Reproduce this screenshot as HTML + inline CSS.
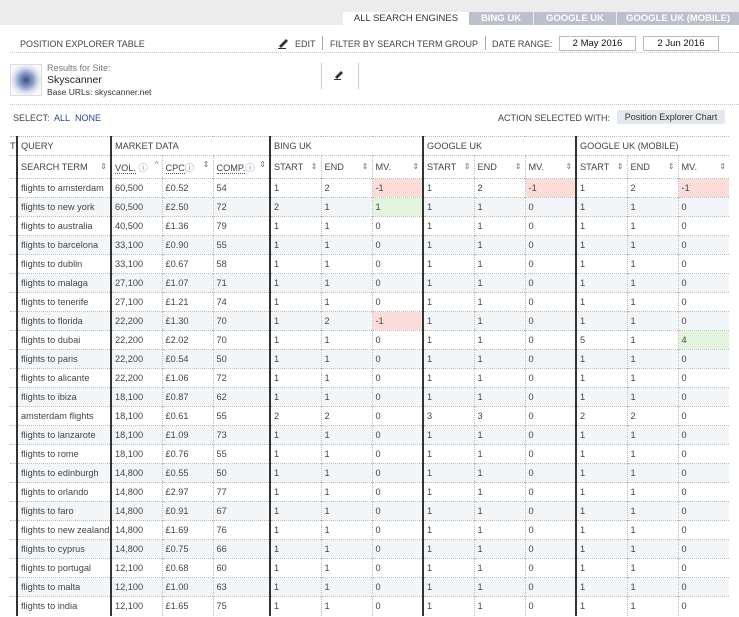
<!DOCTYPE html>
<html><head><meta charset="utf-8">
<style>
*{margin:0;padding:0;box-sizing:border-box}
body{width:739px;height:617px;overflow:hidden;background:#fff;font-family:"Liberation Sans",sans-serif;color:#444;position:relative}
.top{position:absolute;left:0;top:0;width:739px;height:25px;background:#ececec}
.tab{position:absolute;top:12px;height:13px;font-size:9.5px;line-height:13px;text-align:center;color:#fff;background:#bcc0cc;font-weight:bold}
.t{position:absolute;font-size:9px;white-space:nowrap}
.dot{position:absolute;border-top:1px dotted #c8c8c8;height:0}
.box{position:absolute;top:36px;height:15px;border:1px solid #bbb;font-size:9.5px;text-align:center;line-height:13px;color:#111}
table{position:absolute;left:10px;top:136px;width:719px;border-collapse:collapse;table-layout:fixed;font-size:9.2px}
td{height:19px;border-top:1px dotted #bbb;border-left:1px dotted #bbb;padding:0 3px;white-space:nowrap;overflow:hidden;color:#444}
tr.h1 td{height:19px;font-size:9.2px;color:#444}
tr.h2 td{height:23px;font-size:9.2px;color:#444}
tr.alt td{background:#f3f6f9}
td.k{border-left:2px solid #333}
td.r{background:#fbdcd8!important}
td.g{background:#e4f5df!important}
.s{float:right;color:#777;font-size:8px}
.u{border-bottom:1px dotted #555}
.i{color:#6a7fb0}
td.f{border-left:none;padding:0;background:#fff!important}
</style></head><body>
<div class="top"></div>
<div class="tab" style="left:343px;width:126px;background:#fff;color:#333;font-weight:normal">ALL SEARCH ENGINES</div>
<div class="tab" style="left:469px;width:64px">BING UK</div>
<div class="tab" style="left:534px;width:82px">GOOGLE UK</div>
<div class="tab" style="left:617px;width:122px">GOOGLE UK (MOBILE)</div>

<div class="t" style="left:20px;top:39px">POSITION EXPLORER TABLE</div>
<svg style="position:absolute;left:278px;top:37px" width="11" height="12"><path d="M1 9 L8 2 L10 4 L3 11 Z" fill="#333"/><path d="M0 11.5 H8" stroke="#333"/></svg>
<div class="t" style="left:295px;top:39px">EDIT</div>
<div style="position:absolute;left:322px;top:36px;height:14px;border-left:1px solid #aaa"></div>
<div class="t" style="left:330px;top:39px">FILTER BY SEARCH TERM GROUP</div>
<div style="position:absolute;left:485px;top:36px;height:14px;border-left:1px solid #aaa"></div>
<div class="t" style="left:492px;top:39px">DATE RANGE:</div>
<div class="box" style="left:559px;width:77px">2 May 2016</div>
<div class="box" style="left:643px;width:76px">2 Jun 2016</div>
<div class="dot" style="left:10px;top:52px;width:729px"></div>

<div style="position:absolute;left:10px;top:64px;width:32px;height:32px;border:1px solid #ddd;background:radial-gradient(circle,#3a4a7a 0,#7f93c4 30%,#dfe4f0 60%,#fafafa 80%)"></div>
<div class="t" style="left:47px;top:63px;color:#777">Results for Site:</div>
<div class="t" style="left:47px;top:74px;font-size:10.5px;color:#222">Skyscanner</div>
<div class="t" style="left:47px;top:87px;font-size:8.5px;color:#333">Base URLs: skyscanner.net</div>
<div style="position:absolute;left:321px;top:63px;height:26px;border-left:1px solid #ccc"></div>
<div style="position:absolute;left:358px;top:63px;height:26px;border-left:1px solid #ccc"></div>
<svg style="position:absolute;left:334px;top:70px" width="10" height="10"><path d="M1 7 L7 1 L9 3 L3 9 Z" fill="#333"/><path d="M0 9.5 H7" stroke="#333"/></svg>
<div class="dot" style="left:10px;top:104px;width:729px"></div>

<div class="t" style="left:13px;top:113px">SELECT:&nbsp; <span style="color:#2a4a8a">ALL&nbsp; NONE</span></div>
<div class="t" style="left:498px;top:113px">ACTION SELECTED WITH:</div>
<div class="t" style="left:617px;top:110px;width:108px;height:14px;background:#e3e7ee;border-radius:2px;text-align:center;line-height:14px;font-size:9px;color:#333">Position Explorer Chart</div>

<table>
<colgroup><col style="width:7px"><col style="width:94px"><col style="width:51px"><col style="width:51px"><col style="width:57px"><col style="width:51px"><col style="width:51px"><col style="width:51px"><col style="width:51px"><col style="width:51px"><col style="width:51px"><col style="width:51px"><col style="width:51px"><col style="width:51px"></colgroup>
<tr class="h1"><td class="f">T</td><td class="k">QUERY</td><td class="k" colspan="3">MARKET DATA</td><td class="k" colspan="3">BING UK</td><td class="k" colspan="3">GOOGLE UK</td><td class="k" colspan="3">GOOGLE UK (MOBILE)</td></tr>
<tr class="h2"><td class="f"></td><td class="k">SEARCH TERM<span class="s">⇕</span></td><td class="k"><span class="u">VOL.</span> <span class="i">ⓘ</span><span class="s">^</span></td><td><span class="u">CPC</span><span class="i">ⓘ</span><span class="s">⇕</span></td><td><span class="u">COMP.</span><span class="i">ⓘ</span><span class="s">⇕</span></td><td class="k">START<span class="s">⇕</span></td><td>END<span class="s">⇕</span></td><td>MV.<span class="s">⇕</span></td><td class="k">START<span class="s">⇕</span></td><td>END<span class="s">⇕</span></td><td>MV.<span class="s">⇕</span></td><td class="k">START<span class="s">⇕</span></td><td>END<span class="s">⇕</span></td><td>MV.<span class="s">⇕</span></td></tr>
<tr><td class="f"></td><td class="k">flights to amsterdam</td><td class="k">60,500</td><td>£0.52</td><td>54</td><td class="k">1</td><td>2</td><td class="r">-1</td><td class="k">1</td><td>2</td><td class="r">-1</td><td class="k">1</td><td>2</td><td class="r">-1</td></tr>
<tr class="alt"><td class="f"></td><td class="k">flights to new york</td><td class="k">60,500</td><td>£2.50</td><td>72</td><td class="k">2</td><td>1</td><td class="g">1</td><td class="k">1</td><td>1</td><td>0</td><td class="k">1</td><td>1</td><td>0</td></tr>
<tr><td class="f"></td><td class="k">flights to australia</td><td class="k">40,500</td><td>£1.36</td><td>79</td><td class="k">1</td><td>1</td><td>0</td><td class="k">1</td><td>1</td><td>0</td><td class="k">1</td><td>1</td><td>0</td></tr>
<tr class="alt"><td class="f"></td><td class="k">flights to barcelona</td><td class="k">33,100</td><td>£0.90</td><td>55</td><td class="k">1</td><td>1</td><td>0</td><td class="k">1</td><td>1</td><td>0</td><td class="k">1</td><td>1</td><td>0</td></tr>
<tr><td class="f"></td><td class="k">flights to dublin</td><td class="k">33,100</td><td>£0.67</td><td>58</td><td class="k">1</td><td>1</td><td>0</td><td class="k">1</td><td>1</td><td>0</td><td class="k">1</td><td>1</td><td>0</td></tr>
<tr class="alt"><td class="f"></td><td class="k">flights to malaga</td><td class="k">27,100</td><td>£1.07</td><td>71</td><td class="k">1</td><td>1</td><td>0</td><td class="k">1</td><td>1</td><td>0</td><td class="k">1</td><td>1</td><td>0</td></tr>
<tr><td class="f"></td><td class="k">flights to tenerife</td><td class="k">27,100</td><td>£1.21</td><td>74</td><td class="k">1</td><td>1</td><td>0</td><td class="k">1</td><td>1</td><td>0</td><td class="k">1</td><td>1</td><td>0</td></tr>
<tr class="alt"><td class="f"></td><td class="k">flights to florida</td><td class="k">22,200</td><td>£1.30</td><td>70</td><td class="k">1</td><td>2</td><td class="r">-1</td><td class="k">1</td><td>1</td><td>0</td><td class="k">1</td><td>1</td><td>0</td></tr>
<tr><td class="f"></td><td class="k">flights to dubai</td><td class="k">22,200</td><td>£2.02</td><td>70</td><td class="k">1</td><td>1</td><td>0</td><td class="k">1</td><td>1</td><td>0</td><td class="k">5</td><td>1</td><td class="g">4</td></tr>
<tr class="alt"><td class="f"></td><td class="k">flights to paris</td><td class="k">22,200</td><td>£0.54</td><td>50</td><td class="k">1</td><td>1</td><td>0</td><td class="k">1</td><td>1</td><td>0</td><td class="k">1</td><td>1</td><td>0</td></tr>
<tr><td class="f"></td><td class="k">flights to alicante</td><td class="k">22,200</td><td>£1.06</td><td>72</td><td class="k">1</td><td>1</td><td>0</td><td class="k">1</td><td>1</td><td>0</td><td class="k">1</td><td>1</td><td>0</td></tr>
<tr class="alt"><td class="f"></td><td class="k">flights to ibiza</td><td class="k">18,100</td><td>£0.87</td><td>62</td><td class="k">1</td><td>1</td><td>0</td><td class="k">1</td><td>1</td><td>0</td><td class="k">1</td><td>1</td><td>0</td></tr>
<tr><td class="f"></td><td class="k">amsterdam flights</td><td class="k">18,100</td><td>£0.61</td><td>55</td><td class="k">2</td><td>2</td><td>0</td><td class="k">3</td><td>3</td><td>0</td><td class="k">2</td><td>2</td><td>0</td></tr>
<tr class="alt"><td class="f"></td><td class="k">flights to lanzarote</td><td class="k">18,100</td><td>£1.09</td><td>73</td><td class="k">1</td><td>1</td><td>0</td><td class="k">1</td><td>1</td><td>0</td><td class="k">1</td><td>1</td><td>0</td></tr>
<tr><td class="f"></td><td class="k">flights to rome</td><td class="k">18,100</td><td>£0.76</td><td>55</td><td class="k">1</td><td>1</td><td>0</td><td class="k">1</td><td>1</td><td>0</td><td class="k">1</td><td>1</td><td>0</td></tr>
<tr class="alt"><td class="f"></td><td class="k">flights to edinburgh</td><td class="k">14,800</td><td>£0.55</td><td>50</td><td class="k">1</td><td>1</td><td>0</td><td class="k">1</td><td>1</td><td>0</td><td class="k">1</td><td>1</td><td>0</td></tr>
<tr><td class="f"></td><td class="k">flights to orlando</td><td class="k">14,800</td><td>£2.97</td><td>77</td><td class="k">1</td><td>1</td><td>0</td><td class="k">1</td><td>1</td><td>0</td><td class="k">1</td><td>1</td><td>0</td></tr>
<tr class="alt"><td class="f"></td><td class="k">flights to faro</td><td class="k">14,800</td><td>£0.91</td><td>67</td><td class="k">1</td><td>1</td><td>0</td><td class="k">1</td><td>1</td><td>0</td><td class="k">1</td><td>1</td><td>0</td></tr>
<tr><td class="f"></td><td class="k">flights to new zealand</td><td class="k">14,800</td><td>£1.69</td><td>76</td><td class="k">1</td><td>1</td><td>0</td><td class="k">1</td><td>1</td><td>0</td><td class="k">1</td><td>1</td><td>0</td></tr>
<tr class="alt"><td class="f"></td><td class="k">flights to cyprus</td><td class="k">14,800</td><td>£0.75</td><td>66</td><td class="k">1</td><td>1</td><td>0</td><td class="k">1</td><td>1</td><td>0</td><td class="k">1</td><td>1</td><td>0</td></tr>
<tr><td class="f"></td><td class="k">flights to portugal</td><td class="k">12,100</td><td>£0.68</td><td>60</td><td class="k">1</td><td>1</td><td>0</td><td class="k">1</td><td>1</td><td>0</td><td class="k">1</td><td>1</td><td>0</td></tr>
<tr class="alt"><td class="f"></td><td class="k">flights to malta</td><td class="k">12,100</td><td>£1.00</td><td>63</td><td class="k">1</td><td>1</td><td>0</td><td class="k">1</td><td>1</td><td>0</td><td class="k">1</td><td>1</td><td>0</td></tr>
<tr><td class="f"></td><td class="k">flights to india</td><td class="k">12,100</td><td>£1.65</td><td>75</td><td class="k">1</td><td>1</td><td>0</td><td class="k">1</td><td>1</td><td>0</td><td class="k">1</td><td>1</td><td>0</td></tr>
</table>
</body></html>
